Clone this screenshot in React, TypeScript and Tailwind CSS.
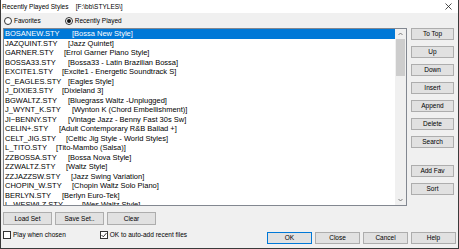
import React from "react"

const styles = [
  { name: "BOSANEW.STY", desc: "[Bossa New Style]", col: 67 },
  { name: "JAZQUINT.STY", desc: "[Jazz Quintet]", col: 63 },
  { name: "GARNER.STY", desc: "[Errol Garner Piano Style]", col: 59 },
  { name: "BOSSA33.STY", desc: "[Bossa33 - Latin Brazilian Bossa]", col: 63 },
  { name: "EXCITE1.STY", desc: "[Excite1 - Energetic Soundtrack S]", col: 57 },
  { name: "C_EAGLES.STY", desc: "[Eagles Style]", col: 63 },
  { name: "J_DIXIE3.STY", desc: "[Dixieland 3]", col: 57 },
  { name: "BGWALTZ.STY", desc: "[Bluegrass Waltz -Unplugged]", col: 63 },
  { name: "J_WYNT_K.STY", desc: "[Wynton K (Chord Embellishment)]", col: 67 },
  { name: "JI~BENNY.STY", desc: "[Vintage Jazz - Benny Fast 30s Sw]", col: 63 },
  { name: "CELIN+.STY", desc: "[Adult Contemporary R&B Ballad +]", col: 54 },
  { name: "CELT_JIG.STY", desc: "[Celtic Jig Style - World Styles]", col: 61 },
  { name: "L_TITO.STY", desc: "[Tito-Mambo (Salsa)]", col: 51 },
  { name: "ZZBOSSA.STY", desc: "[Bossa Nova Style]", col: 63 },
  { name: "ZZWALTZ.STY", desc: "[Waltz Style]", col: 61 },
  { name: "ZZJAZZSW.STY", desc: "[Jazz Swing Variation]", col: 66 },
  { name: "CHOPIN_W.STY", desc: "[Chopin Waltz Solo Piano]", col: 67 },
  { name: "BERLYN.STY", desc: "[Berlyn Euro-Tek]", col: 57 },
  { name: "L_WESWLZ.STY", desc: "[Wes Waltz Style]", col: 77 },
]

function Btn({ label, wide, def }: { label: string; wide?: boolean; def?: boolean }) {
  return (
    <div
      className={`flex items-center justify-center bg-[#e1e1e1] border text-[6.5px] text-black ${
        def ? "border-[#0078d7]" : "border-[#adadad]"
      } ${wide ? "w-[49px] h-[13px]" : "w-[45px] h-[12px]"}`}
    >
      {label}
    </div>
  )
}

function SideBtn({ label }: { label: string }) {
  return (
    <div className="flex items-center justify-center w-[43px] h-[12px] bg-[#e1e1e1] border border-[#adadad] text-[6.5px] text-black">
      {label}
    </div>
  )
}

function Radio({ checked, label }: { checked?: boolean; label: string }) {
  return (
    <div className="flex items-center gap-[2px]">
      <div className="flex items-center justify-center w-[8px] h-[8px] rounded-full border border-[#333] bg-white">
        {checked && <div className="w-[4px] h-[4px] rounded-full bg-[#111]" />}
      </div>
      <span className="text-[6.5px]">{label}</span>
    </div>
  )
}

function Check({ checked, label }: { checked?: boolean; label: string }) {
  return (
    <div className="flex items-center gap-[2px]">
      <div className="flex items-center justify-center w-[8px] h-[8px] border border-[#333] bg-white">
        {checked && (
          <svg width="6" height="6" viewBox="0 0 6 6">
            <polyline points="0.5,3 2.3,4.8 5.5,1" fill="none" stroke="#222" strokeWidth="0.9" />
          </svg>
        )}
      </div>
      <span className="text-[6.5px]">{label}</span>
    </div>
  )
}

export default function App() {
  return (
    <div className="w-[459px] h-[249px] bg-[#f0f0f0] border-l border-r border-b border-[#3a3a3a] flex flex-col font-['Liberation_Sans',Arial,sans-serif] text-black overflow-hidden">
      {/* title bar */}
      <div className="h-[13px] bg-white flex items-center justify-between pl-[1px] pr-[6px]">
        <span className="text-[6.5px] whitespace-pre">{"Recently Played Styles    [F:\\bb\\STYLES\\]"}</span>
        <svg width="7" height="7" viewBox="0 0 7 7">
          <path d="M0.5 0.5 L6.5 6.5 M6.5 0.5 L0.5 6.5" stroke="#222" strokeWidth="0.8" />
        </svg>
      </div>

      {/* radios */}
      <div className="h-[15px] flex items-center gap-[24px] pl-[3px]">
        <Radio label="Favorites" />
        <Radio checked label="Recently Played" />
      </div>

      {/* list + side buttons */}
      <div className="flex pl-[2px] gap-[4px]">
        <div className="w-[404px] h-[178px] border border-[#828790] bg-white flex">
          <div className="flex-1 overflow-hidden">
            {styles.map((s, i) => (
              <div
                key={s.name}
                className={`h-[9.5px] flex items-center pl-[1px] text-[7.5px] whitespace-nowrap ${
                  i === 0 ? "bg-[#0078d7] text-white" : ""
                }`}
              >
                <span className="inline-block" style={{ width: s.col }}>
                  {s.name}
                </span>
                <span>{s.desc}</span>
              </div>
            ))}
          </div>
          <div className="w-[11px] bg-[#f0f0f0] flex flex-col items-center">
            <div className="h-[10px] flex items-center justify-center">
              <svg width="5" height="4" viewBox="0 0 5 4">
                <polyline points="0.5,3 2.5,1 4.5,3" fill="none" stroke="#606060" strokeWidth="0.8" />
              </svg>
            </div>
            <div className="w-[9px] h-[37px] bg-[#cdcdcd]" />
            <div className="flex-1" />
            <div className="h-[10px] flex items-center justify-center">
              <svg width="5" height="4" viewBox="0 0 5 4">
                <polyline points="0.5,1 2.5,3 4.5,1" fill="none" stroke="#606060" strokeWidth="0.8" />
              </svg>
            </div>
          </div>
        </div>
        <div className="flex flex-col gap-[6px]">
          <SideBtn label="To Top" />
          <SideBtn label="Up" />
          <SideBtn label="Down" />
          <SideBtn label="Insert" />
          <SideBtn label="Append" />
          <SideBtn label="Delete" />
          <SideBtn label="Search" />
          <div className="mt-[11px] flex flex-col gap-[6px]">
            <SideBtn label="Add Fav" />
            <SideBtn label="Sort" />
          </div>
        </div>
      </div>

      {/* set buttons */}
      <div className="mt-[6px] pl-[2px] flex gap-[3px]">
        <Btn wide label="Load Set" />
        <Btn wide label="Save Set.." />
        <Btn wide label="Clear" />
      </div>

      {/* bottom row */}
      <div className="flex-1 flex justify-between pl-[2px] pr-[2px]">
        <div className="flex items-start gap-[34px] pt-[5px]">
          <Check label="Play when chosen" />
          <Check checked label="OK to auto-add recent files" />
        </div>
        <div className="flex gap-[3px] pt-[7px]">
          <Btn def label="OK" />
          <Btn label="Close" />
          <Btn label="Cancel" />
          <Btn label="Help" />
        </div>
      </div>
    </div>
  )
}
